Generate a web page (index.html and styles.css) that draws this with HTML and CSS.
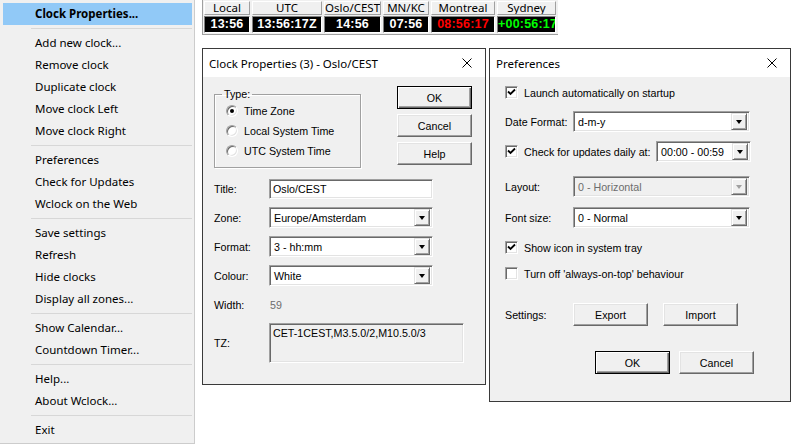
FILE: index.html
```html
<!DOCTYPE html>
<html lang="en">
<head>
<meta charset="utf-8">
<title>Wclock</title>
<link rel="stylesheet" href="styles.css">
</head>
<body>
<div class="desktop">

  <ul class="menu">
    <li class="mi active">Clock Properties...</li>
    <li class="sep"></li>
    <li class="mi">Add new clock...</li>
    <li class="mi">Remove clock</li>
    <li class="mi">Duplicate clock</li>
    <li class="mi">Move clock Left</li>
    <li class="mi">Move clock Right</li>
    <li class="sep"></li>
    <li class="mi">Preferences</li>
    <li class="mi">Check for Updates</li>
    <li class="mi">Wclock on the Web</li>
    <li class="sep"></li>
    <li class="mi">Save settings</li>
    <li class="mi">Refresh</li>
    <li class="mi">Hide clocks</li>
    <li class="mi">Display all zones...</li>
    <li class="sep"></li>
    <li class="mi">Show Calendar...</li>
    <li class="mi">Countdown Timer...</li>
    <li class="sep"></li>
    <li class="mi">Help...</li>
    <li class="mi">About Wclock...</li>
    <li class="sep"></li>
    <li class="mi">Exit</li>
  </ul>

  <div class="clockbar">
    <div class="clock c-local"><div class="ch">Local</div><div class="ct">13:56</div></div>
    <div class="clock c-utc"><div class="ch">UTC</div><div class="ct">13:56:17Z</div></div>
    <div class="clock c-oslo"><div class="ch">Oslo/CEST</div><div class="ct">14:56</div></div>
    <div class="clock c-mn"><div class="ch">MN/KC</div><div class="ct">07:56</div></div>
    <div class="clock c-mtl"><div class="ch">Montreal</div><div class="ct red">08:56:17</div></div>
    <div class="clock c-syd"><div class="ch">Sydney</div><div class="ct green">+00:56:17</div></div>
  </div>

  <section class="win win-props">
    <header class="titlebar">
      <span class="title">Clock Properties (3) - Oslo/CEST</span>
      <svg class="close" width="10" height="10" viewBox="0 0 10 10"><path d="M0.5 0.5 L9.5 9.5 M9.5 0.5 L0.5 9.5" stroke="#000" stroke-width="1" fill="none"/></svg>
    </header>
    <div class="body props-body">
      <div class="props-top">
        <fieldset class="group">
          <legend>Type:</legend>
          <div class="radio-row"><span class="rb on"></span>Time Zone</div>
          <div class="radio-row"><span class="rb"></span>Local System Time</div>
          <div class="radio-row"><span class="rb"></span>UTC System Time</div>
        </fieldset>
        <div class="btncol">
          <button class="btn default">OK</button>
          <button class="btn">Cancel</button>
          <button class="btn">Help</button>
        </div>
      </div>
      <div class="props-grid">
        <span class="lbl">Title:</span>
        <div class="edit w164">Oslo/CEST</div>
        <span class="lbl">Zone:</span>
        <div class="combo w164"><span class="val">Europe/Amsterdam</span><span class="drop"><span class="arrow"></span></span></div>
        <span class="lbl">Format:</span>
        <div class="combo w164"><span class="val">3 - hh:mm</span><span class="drop"><span class="arrow"></span></span></div>
        <span class="lbl">Colour:</span>
        <div class="combo w164"><span class="val">White</span><span class="drop"><span class="arrow"></span></span></div>
        <span class="lbl">Width:</span>
        <span class="dimval">59</span>
        <span class="lbl">TZ:</span>
        <div class="tzbox">CET-1CEST,M3.5.0/2,M10.5.0/3</div>
      </div>
    </div>
  </section>

  <section class="win win-prefs">
    <header class="titlebar">
      <span class="title">Preferences</span>
      <svg class="close" width="10" height="10" viewBox="0 0 10 10"><path d="M0.5 0.5 L9.5 9.5 M9.5 0.5 L0.5 9.5" stroke="#000" stroke-width="1" fill="none"/></svg>
    </header>
    <div class="body prefs-body">
      <div class="prow r1">
        <div class="chk"><span class="cb"><svg width="9" height="9" viewBox="0 0 9 9"><path d="M1 3.5 L3.5 6 L8 1.5" stroke="#000" stroke-width="1.8" fill="none"/></svg></span>Launch automatically on startup</div>
      </div>
      <div class="prow r2">
        <span class="plbl">Date Format:</span>
        <div class="combo w177"><span class="val">d-m-y</span><span class="drop"><span class="arrow"></span></span></div>
      </div>
      <div class="prow r3 spread">
        <div class="chk"><span class="cb"><svg width="9" height="9" viewBox="0 0 9 9"><path d="M1 3.5 L3.5 6 L8 1.5" stroke="#000" stroke-width="1.8" fill="none"/></svg></span>Check for updates daily at:</div>
        <div class="combo w95"><span class="val">00:00 - 00:59</span><span class="drop"><span class="arrow"></span></span></div>
      </div>
      <div class="prow r4">
        <span class="plbl">Layout:</span>
        <div class="combo w177 disabled"><span class="val">0 - Horizontal</span><span class="drop"><span class="arrow"></span></span></div>
      </div>
      <div class="prow r5">
        <span class="plbl">Font size:</span>
        <div class="combo w177"><span class="val">0 - Normal</span><span class="drop"><span class="arrow"></span></span></div>
      </div>
      <div class="prow r6">
        <div class="chk"><span class="cb"><svg width="9" height="9" viewBox="0 0 9 9"><path d="M1 3.5 L3.5 6 L8 1.5" stroke="#000" stroke-width="1.8" fill="none"/></svg></span>Show icon in system tray</div>
      </div>
      <div class="prow r7">
        <div class="chk"><span class="cb"></span>Turn off 'always-on-top' behaviour</div>
      </div>
      <div class="prow r8">
        <span class="plbl">Settings:</span>
        <button class="btn">Export</button>
        <button class="btn import">Import</button>
      </div>
      <div class="prow r9">
        <button class="btn default">OK</button>
        <button class="btn">Cancel</button>
      </div>
    </div>
  </section>

</div>
</body>
</html>
```

FILE: styles.css
```css
* { box-sizing: border-box; }
html, body { margin: 0; padding: 0; }
body {
  background: #ffffff;
  width: 791px;
  height: 444px;
  overflow: hidden;
  font-family: "Liberation Sans", Arial, sans-serif;
  font-size: 10.7px;
  color: #000;
}
.desktop { position: relative; width: 791px; height: 444px; }

/* ---------- context menu ---------- */
.menu {
  position: absolute;
  left: 0;
  top: 0;
  width: 195px;
  margin: 0;
  padding: 3px 2px 2px 3px;
  list-style: none;
  background: #f0f0f0;
  border-right: 1px solid #cccccc;
  border-bottom: 1px solid #cccccc;
  font-family: "Noto Sans", "Open Sans", sans-serif;
  font-size: 11.5px;
  color: #000;
}
.mi {
  height: 22px;
  line-height: 22px;
  padding-left: 32px;
  white-space: nowrap;
}
.mi.active { background: #91c9f7; font-weight: bold; }
.sep {
  height: 7px;
  background: linear-gradient(#d7d7d7, #d7d7d7) no-repeat 28px 3px / calc(100% - 28px) 1px;
}

/* ---------- clock bar ---------- */
.clockbar {
  position: absolute;
  left: 202px;
  top: 0;
  display: flex;
  gap: 2px;
  padding: 1px 2px 1px 1px;
  background: #f0f0f0;
  border-left: 1px solid #a0a0a0;
  border-bottom: 1px solid #a0a0a0;
}
.clock { display: flex; flex-direction: column; gap: 1px; }
.c-local { width: 46px; }
.c-utc { width: 70px; }
.c-oslo { width: 57px; }
.c-mn { width: 46px; }
.c-mtl { width: 64px; }
.c-syd { width: 59px; }
.ch {
  height: 14px;
  border: 1px solid;
  border-color: #ffffff #a0a0a0 #a0a0a0 #ffffff;
  background: #f0f0f0;
  font-family: "Noto Sans", "Open Sans", sans-serif;
  font-size: 11.5px;
  line-height: 11px;
  text-align: center;
  white-space: nowrap;
  overflow: hidden;
}
.ct {
  height: 17px;
  background: #000;
  border: 1px solid;
  border-color: #808080 #ffffff #ffffff #808080;
  color: #fff;
  font-family: "Liberation Sans", Arial, sans-serif;
  font-weight: bold;
  font-size: 12.5px;
  line-height: 15px;
  text-align: center;
  letter-spacing: 0.2px;
  white-space: nowrap;
  overflow: hidden;
}
.ct.red { color: #ff0000; }
.ct.green { color: #00ff00; }

/* ---------- windows ---------- */
.win {
  position: absolute;
  top: 48px;
  border: 1px solid #3a3a3a;
  background: #f0f0f0;
  display: flex;
  flex-direction: column;
}
.win-props { left: 202px; width: 284px; height: 337px; }
.win-prefs { left: 489px; width: 302px; height: 354px; }

.titlebar {
  height: 28px;
  flex: none;
  background: #ffffff;
  display: flex;
  align-items: center;
  padding: 0 13px 0 6px;
  font-family: "Noto Sans", "Open Sans", sans-serif;
  font-size: 11.5px;
}
.titlebar .title { flex: 1; white-space: nowrap; }
.close { flex: none; display: block; }

.body { flex: 1; }

/* ---------- common controls ---------- */
.btn {
  width: 75px;
  height: 23px;
  padding: 0;
  margin: 0;
  background: #f0f0f0;
  border: 1px solid;
  border-color: #ffffff #696969 #696969 #ffffff;
  box-shadow: inset -1px -1px 0 #a0a0a0, inset 1px 1px 0 #e3e3e3;
  font-family: "Liberation Sans", Arial, sans-serif;
  font-size: 10.7px;
  color: #000;
}
.btn.default {
  border: 1px solid #000;
  box-shadow: inset 1px 1px 0 #ffffff, inset -1px -1px 0 #696969, inset -2px -2px 0 #a0a0a0;
}

.edit, .combo, .tzbox {
  border: 1px solid;
  border-color: #a0a0a0 #ffffff #ffffff #a0a0a0;
  box-shadow: inset 1px 1px 0 #696969, inset -1px -1px 0 #e3e3e3;
  background: #ffffff;
}
.edit {
  height: 20px;
  padding: 0 3px;
  line-height: 18px;
}
.combo {
  height: 21px;
  display: flex;
  align-items: center;
  padding: 2px;
}
.combo .val {
  flex: 1;
  padding-left: 2px;
  white-space: nowrap;
  overflow: hidden;
}
.combo .drop {
  width: 16px;
  height: 17px;
  flex: none;
  background: #f0f0f0;
  border: 1px solid;
  border-color: #e3e3e3 #696969 #696969 #e3e3e3;
  box-shadow: inset 1px 1px 0 #ffffff, inset -1px -1px 0 #a0a0a0;
  display: flex;
  align-items: center;
  justify-content: center;
}
.arrow {
  width: 0;
  height: 0;
  border-left: 3.5px solid transparent;
  border-right: 3.5px solid transparent;
  border-top: 4px solid #000;
  margin-top: 1px;
}
.combo.disabled { background: #f0f0f0; color: #6d6d6d; }
.combo.disabled .arrow { border-top-color: #a0a0a0; }

.w164 { width: 164px; }
.w177 { width: 177px; }
.w95 { width: 95px; }

/* ---------- clock properties ---------- */
.props-body { padding: 9px 0 0 11px; }
.props-top { display: flex; align-items: flex-start; }
.group {
  width: 147px;
  height: 80px;
  margin: 2px 0 0 0;
  padding: 0 0 0 11px;
  border: 1px solid #a0a0a0;
  box-shadow: inset 1px 1px 0 #ffffff, 1px 1px 0 #ffffff;
}
.group legend {
  margin-left: -4px;
  padding: 0 2px;
  line-height: 13px;
}
.radio-row {
  height: 20px;
  display: flex;
  align-items: center;
  gap: 6px;
}
.rb {
  width: 12px;
  height: 12px;
  border-radius: 50%;
  border: 1px solid;
  border-color: #a0a0a0 #ffffff #ffffff #a0a0a0;
  box-shadow: inset 1px 1px 0 #696969, inset -1px -1px 0 #e3e3e3;
  background: #ffffff;
  display: flex;
  align-items: center;
  justify-content: center;
  flex: none;
}
.rb.on::after {
  content: "";
  width: 4px;
  height: 4px;
  border-radius: 50%;
  background: #000;
}
.btncol {
  margin-left: 36px;
  display: flex;
  flex-direction: column;
  gap: 5px;
}
.props-grid {
  margin-top: 10px;
  display: grid;
  grid-template-columns: 55px auto;
  grid-template-rows: 21px 21px 21px 21px 21px 40px;
  row-gap: 8px;
  align-items: center;
  justify-items: start;
}
.dimval { color: #6d6d6d; padding-left: 1px; }
.tzbox {
  width: 195px;
  height: 40px;
  background: #f0f0f0;
  padding: 3px 3px;
  line-height: 13px;
  align-self: start;
}

/* ---------- preferences ---------- */
.prefs-body { padding: 5px 0 0 15px; }
.prow {
  width: 246px;
  height: 21px;
  display: flex;
  align-items: center;
}
.prow.spread { justify-content: space-between; }
.plbl { width: 68px; flex: none; }
.r2 { margin-top: 8px; }
.r3 { margin-top: 9px; }
.r4 { margin-top: 14px; }
.r5 { margin-top: 10px; }
.r6 { margin-top: 9px; }
.r7 { margin-top: 5px; }
.r8 { margin-top: 19px; height: 23px; }
.r9 { margin-top: 25px; height: 23px; width: 249px; justify-content: flex-end; gap: 9px; }
.import { margin-left: 15px; }
.chk { display: flex; align-items: center; gap: 6px; white-space: nowrap; }
.cb {
  width: 13px;
  height: 13px;
  flex: none;
  border: 1px solid;
  border-color: #a0a0a0 #ffffff #ffffff #a0a0a0;
  box-shadow: inset 1px 1px 0 #696969, inset -1px -1px 0 #e3e3e3;
  background: #ffffff;
  display: flex;
  align-items: center;
  justify-content: center;
}
.cb svg { display: block; }
```
